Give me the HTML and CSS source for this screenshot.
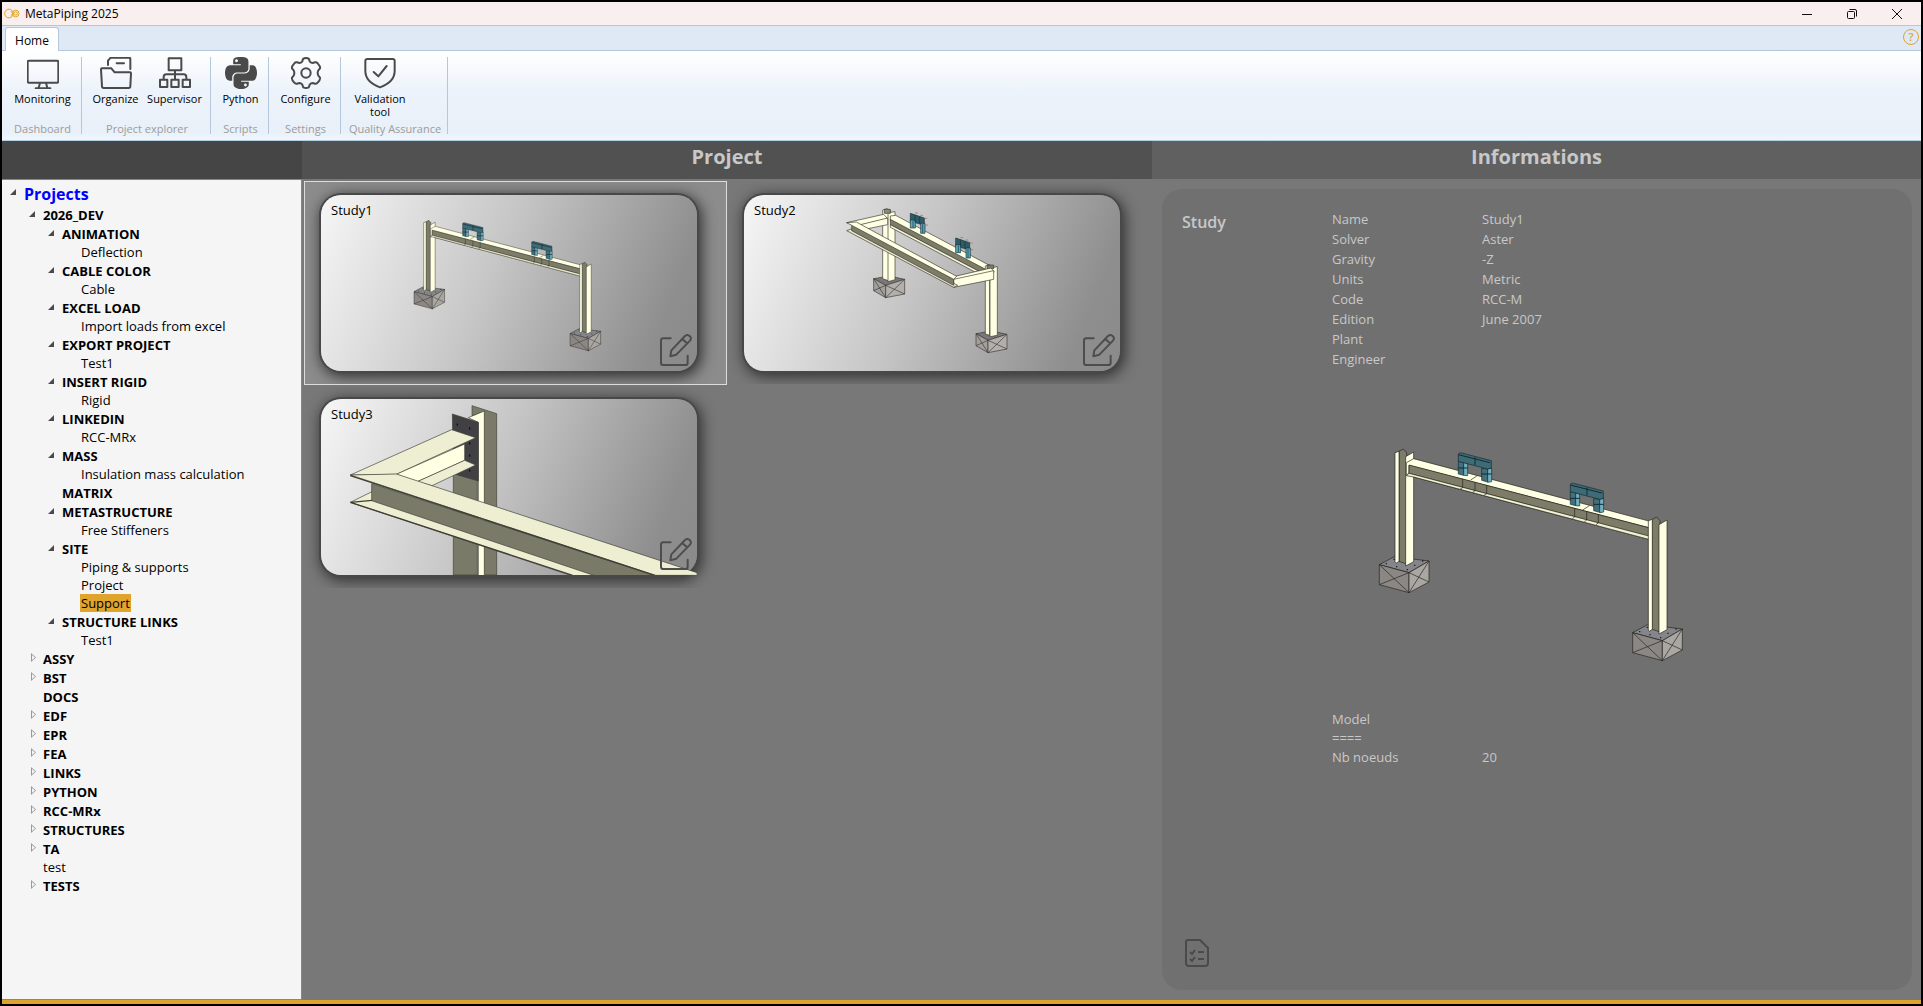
FILE: index.html
```html
<!DOCTYPE html>
<html lang="en">
<head>
<meta charset="utf-8">
<meta name="viewport" content="width=device-width, initial-scale=1">
<title>MetaPiping 2025</title>
<link rel="stylesheet" href="styles.css">
</head>
<body>
<svg class="defs" aria-hidden="true">
  <defs>
    <g id="column" stroke="#22221c" stroke-width="2" stroke-linejoin="round">
      <path fill="#85858c" d="M118 404 163 380 267 393 207 428Z"/>
      <path fill="#8b8784" d="M118 404 207 428V488L118 464Z"/>
      <path fill="#aaa6a2" d="M207 428 267 393V456L207 488Z"/>
      <path fill="none" d="M118 404 207 488M207 428 118 464M207 428 267 456M267 393 207 488"/>
      <path fill="none" stroke-width="4" d="M137 401h4M168 410h4M200 419h4M222 406h4M246 393h4M160 388h4"/>
      <path fill="#7c7c69" d="M177 64 190 57 200 68V402L177 394Z"/>
      <path fill="#ffffe4" d="M165 68 177 64V394L168 400 165 396Z"/>
      <path fill="#ffffe4" d="M197 80 221 66V395L197 408Z"/>
    </g>
    <g id="clamp" stroke="#102a30" stroke-width="2" stroke-linejoin="round">
      <path fill="#42707c" d="M355 94 371 97V136L355 132ZM425 115 443 117V156L425 151Z"/>
      <path fill="#6fb0c2" d="M371 97 383 101V137L371 136ZM443 117 455 114V155L443 157Z"/>
      <path fill="#3f6b76" d="M355 72 361 68 454 92V114L443 117 355 94Z"/>
      <path fill="none" stroke-width="3" d="M355 74 450 98M405 82V105M355 114H383M425 132H455"/>
    </g>
    <symbol id="portal" viewBox="0 0 1140 750">
      <use href="#column"/>
      <g stroke="#22221c" stroke-width="2" stroke-linejoin="round">
        <path fill="#ffffe4" d="M199 98 221 86 930 274V294L207 106V130L221 141 930 329V317L207 128 199 137Z"/>
        <path fill="#7c7c69" d="M207 105 930 294V320L207 130Z"/>
        <path fill="#f2f2d4" d="M199 137 207 130 930 319V329L221 141Z"/>
        <path fill="none" d="M368 146V173L360 178M405 156V182L398 187M440 165V191L432 196M704 234V261L697 266M740 243V270L733 275M775 252V279L768 284M392 150 412 137M728 240 748 227"/>
      </g>
      <use href="#clamp"/>
      <use href="#clamp" x="336" y="91"/>
      <use href="#column" x="760" y="204"/>
    </symbol>
    <symbol id="edit" viewBox="0 0 96 96">
      <path fill="none" stroke="currentColor" stroke-width="6" stroke-linecap="round" stroke-linejoin="round" d="M32 13H10Q3 13 3 20V86Q3 93 10 93H76Q83 93 83 86V65M31 67 34 49 75 6Q82 0 89 6 96 12 90 20L49 62ZM67 15 81 28"/>
    </symbol>
  </defs>
</svg>
<div class="window">
  <header class="titlebar">
    <svg class="logo" viewBox="0 0 48 32" aria-hidden="true"><g fill="none" stroke="#dfa42b" stroke-width="3"><circle cx="15" cy="16" r="13"/><circle cx="35" cy="16" r="10"/><circle cx="35" cy="16" r="5"/><path d="M20 9 27 16 20 23"/></g></svg>
    <span class="app-name">MetaPiping 2025</span>
    <div class="window-controls">
      <button type="button" aria-label="Minimize"><svg viewBox="0 0 12 12"><path d="M1 6.5H11"/></svg></button>
      <button type="button" aria-label="Restore"><svg viewBox="0 0 12 12"><rect x="1.500" y="3.500" width="7" height="7" rx="1"/><path d="M3.500 1.500H9Q10.500 1.500 10.500 3V8.500"/></svg></button>
      <button type="button" aria-label="Close"><svg viewBox="0 0 12 12"><path d="M1 1 11 11M11 1 1 11"/></svg></button>
    </div>
  </header>
  <nav class="tabs">
    <button type="button" class="tab">Home</button>
    <button type="button" class="help" aria-label="Help">?</button>
  </nav>
  <section class="ribbon">
    <div class="group dashboard">
      <div class="tools">
        <button type="button" class="tool"><svg viewBox="0 0 96 96"><path d="M6 11H90Q94 11 94 15V73Q94 77 90 77H6Q2 77 2 73V15Q2 11 6 11ZM39 78 35 92M57 78 61 92M26 94H70"/></svg>Monitoring</button>
      </div>
      <h2>Dashboard</h2>
    </div>
    <div class="group explorer">
      <div class="tools">
        <button type="button" class="tool"><svg viewBox="0 0 96 96"><path d="M3 37Q3 34 6 34H34L44 46H90Q93 46 93 49L91 88Q91 93 86 93H11Q6 93 6 88ZM24 24V11L32 2H87Q91 2 91 6V36M50 19H72"/></svg>Organize</button>
        <button type="button" class="tool"><svg viewBox="0 0 96 96"><path d="M29 4H67V40H29ZM48 40V66M14 66V60Q14 52 22 52H74Q82 52 82 60V66M3 68H25V90H3ZM37 68H59V90H37ZM71 68H93V90H71Z"/></svg>Supervisor</button>
      </div>
      <h2>Project explorer</h2>
    </div>
    <div class="group scripts">
      <div class="tools">
        <button type="button" class="tool"><svg class="solid" viewBox="0 32 448 448"><path d="M439.8 200.5c-7.7-30.9-22.3-54.2-53.4-54.2h-40.1v47.4c0 36.8-31.2 67.8-66.800 67.800H172.700c-29.200 0-53.400 25-53.400 54.300v101.800c0 29 25.200 46 53.400 54.300 33.800 9.900 66.300 11.700 106.800 0 26.900-7.800 53.400-23.500 53.400-54.300v-40.700H226.200v-13.600h160.200c31.100 0 42.600-21.700 53.400-54.200 11.200-33.500 10.700-65.700 0-108.600zM286.200 404c11.100 0 20.100 9.100 20.100 20.300 0 11.300-9 20.400-20.100 20.400-11 0-20.100-9.200-20.100-20.400.1-11.300 9.100-20.300 20.100-20.300zM167.800 248.100h106.800c29.700 0 53.400-24.500 53.400-54.300V91.900c0-29-24.400-50.700-53.400-55.600-35.800-5.900-74.700-5.600-106.800.1-45.200 8-53.400 24.700-53.400 55.600v40.700h106.900v13.600h-147c-31.100 0-58.300 18.700-66.800 54.200-9.800 40.700-10.200 66.100 0 108.600 7.600 31.600 25.700 54.200 56.800 54.200H101v-48.800c0-35.300 30.500-66.400 66.800-66.400zm-6.700-142.600c-11.100 0-20.100-9.100-20.100-20.300.1-11.300 9-20.400 20.100-20.400 11 0 20.100 9.200 20.100 20.400s-9 20.300-20.100 20.300z"/></svg>Python</button>
      </div>
      <h2>Scripts</h2>
    </div>
    <div class="group settings">
      <div class="tools">
        <button type="button" class="tool"><svg viewBox="0 0 96 96"><path d="M40 5Q48 1 56 5 58 8 59 13 63 18 68 18L75 16Q80 15 83 19 92 29 90 34L85 40Q81 48 85 56L90 62Q92 67 83 77 80 81 75 80L68 78Q63 78 59 83 58 88 56 91 48 95 40 91 38 88 37 83 33 78 28 78L21 80Q16 81 13 77 4 67 6 62L11 56Q15 48 11 40L6 34Q4 29 13 19 16 15 21 16L28 18Q33 18 37 13 38 8 40 5Z"/><circle cx="48" cy="48" r="14"/></svg>Configure</button>
      </div>
      <h2>Settings</h2>
    </div>
    <div class="group quality">
      <div class="tools">
        <button type="button" class="tool"><svg viewBox="0 0 96 96"><path d="M10 6H86Q92 6 92 12V42Q92 75 48 91 4 75 4 42V12Q4 6 10 6ZM29 45 43 58 68 27"/></svg>Validation<br>tool</button>
      </div>
      <h2>Quality Assurance</h2>
    </div>
  </section>
  <main class="workspace">
    <aside class="sidebar">
      <div class="pane-title"></div>
      <ul class="tree">
        <li><button type="button" class="node root open">Projects</button>
          <ul>
            <li><button type="button" class="node folder open">2026_DEV</button>
              <ul>
                <li><button type="button" class="node folder open">ANIMATION</button><ul><li><button type="button" class="node">Deflection</button></li></ul></li>
                <li><button type="button" class="node folder open">CABLE COLOR</button><ul><li><button type="button" class="node">Cable</button></li></ul></li>
                <li><button type="button" class="node folder open">EXCEL LOAD</button><ul><li><button type="button" class="node">Import loads from excel</button></li></ul></li>
                <li><button type="button" class="node folder open">EXPORT PROJECT</button><ul><li><button type="button" class="node">Test1</button></li></ul></li>
                <li><button type="button" class="node folder open">INSERT RIGID</button><ul><li><button type="button" class="node">Rigid</button></li></ul></li>
                <li><button type="button" class="node folder open">LINKEDIN</button><ul><li><button type="button" class="node">RCC-MRx</button></li></ul></li>
                <li><button type="button" class="node folder open">MASS</button><ul><li><button type="button" class="node">Insulation mass calculation</button></li></ul></li>
                <li><button type="button" class="node folder">MATRIX</button></li>
                <li><button type="button" class="node folder open">METASTRUCTURE</button><ul><li><button type="button" class="node">Free Stiffeners</button></li></ul></li>
                <li><button type="button" class="node folder open">SITE</button>
                  <ul>
                    <li><button type="button" class="node">Piping &amp; supports</button></li>
                    <li><button type="button" class="node">Project</button></li>
                    <li><button type="button" class="node selected">Support</button></li>
                  </ul>
                </li>
                <li><button type="button" class="node folder open">STRUCTURE LINKS</button><ul><li><button type="button" class="node">Test1</button></li></ul></li>
              </ul>
            </li>
            <li><button type="button" class="node folder closed">ASSY</button></li>
            <li><button type="button" class="node folder closed">BST</button></li>
            <li><button type="button" class="node folder">DOCS</button></li>
            <li><button type="button" class="node folder closed">EDF</button></li>
            <li><button type="button" class="node folder closed">EPR</button></li>
            <li><button type="button" class="node folder closed">FEA</button></li>
            <li><button type="button" class="node folder closed">LINKS</button></li>
            <li><button type="button" class="node folder closed">PYTHON</button></li>
            <li><button type="button" class="node folder closed">RCC-MRx</button></li>
            <li><button type="button" class="node folder closed">STRUCTURES</button></li>
            <li><button type="button" class="node folder closed">TA</button></li>
            <li><button type="button" class="node">test</button></li>
            <li><button type="button" class="node folder closed">TESTS</button></li>
          </ul>
        </li>
      </ul>
    </aside>
    <section class="project">
      <h1 class="pane-title">Project</h1>
      <div class="studies">
        <div class="cell active">
          <article class="card">
            <svg class="scene" viewBox="63 60 1128 528" aria-hidden="true"><use href="#portal" x="269" y="101" width="703" height="462"/></svg>
            <h3>Study1</h3>
            <button type="button" class="edit" aria-label="Edit Study1"><svg><use href="#edit"/></svg></button>
          </article>
        </div>
        <div class="cell">
          <article class="card">
            <svg class="scene" viewBox="27 45 1128 528" aria-hidden="true">
              <g stroke="#3a3a30" stroke-width="2" stroke-linejoin="round">
                <g id="footing">
                  <path fill="#77777d" d="M416 296 462 288 509 298 452 316Z"/>
                  <path fill="#a39f9c" d="M416 296 452 316V353L416 332Z"/>
                  <path fill="#b3afac" d="M452 316 509 298V342L452 353Z"/>
                  <path fill="none" d="M416 296 452 353M452 316 416 332M452 316 509 342M509 298 452 353"/>
                </g>
                <use href="#footing" x="307" y="165"/>
                <path fill="#ffffe4" d="M443 90 456 86 466 92V304L443 296Z"/>
                <path fill="#ffffe4" d="M459 98 480 95V299L459 305Z"/>
                <path fill="#8a8a76" d="M448 88H466V100H448Z"/>
                <path fill="#ffffe4" d="M335 128 446 103 458 116 365 138Z"/>
                <path fill="#ffffe4" d="M368 136 458 114V134L398 146Z"/>
                <path fill="#ffffe4" d="M466 108 482 106 765 257 750 272 466 122Z"/>
                <path fill="#7c7c69" d="M466 118 752 268 736 276 466 134Z"/>
                <path fill="#f4f4d8" d="M466 134 736 276 720 276 466 142Z"/>
                <path fill="#ffffe4" d="M751 258 764 254V466L751 462Z"/>
                <path fill="#ffffe4" d="M765 264 787 260V466L765 470Z"/>
                <path fill="#7c7c69" d="M756 255H776V266H756Z"/>
                <path fill="#ffffe4" d="M656 290 768 264 778 276 660 301Z"/>
                <path fill="#ffffe4" d="M656 298 776 272V298L656 322Z"/>
                <path fill="#e9e9cb" d="M335 152 348 147 668 316 656 322Z"/>
                <path fill="#7c7c69" d="M350 134 656 296V316L350 152Z"/>
                <path fill="#ffffe4" d="M335 128 364 126 665 289 656 298Z"/>
              </g>
              <g id="support" stroke="#14323a" stroke-width="2">
                <path fill="#2f5b66" d="M526 100 568 114V136L526 124Z"/>
                <path fill="#5fa9bd" d="M526 120H541V144H526ZM557 130H570V160H557Z"/>
                <path fill="none" d="M534 122V143M563 132V159M540 105V126M554 110V131"/>
                <path fill="none" stroke="#a06464" d="M540 99H549M556 106H564M568 115H577M570 135H579"/>
              </g>
              <use href="#support" x="136" y="74"/>
            </svg>
            <h3>Study2</h3>
            <button type="button" class="edit" aria-label="Edit Study2"><svg><use href="#edit"/></svg></button>
          </article>
        </div>
        <div class="cell">
          <article class="card">
            <svg class="scene" viewBox="63 42 1128 528" aria-hidden="true">
              <g stroke="#3f3f35" stroke-width="2" stroke-linejoin="round">
                <path fill="#7a7a69" d="M516 62 590 86V570H553V80L516 92ZM460 262H532V570H460Z"/>
                <path fill="#ffffe4" d="M505 98 553 78V572H535V112Z"/>
                <path fill="#414145" d="M457 87 535 112V288L460 266Z"/>
                <path fill="none" stroke="#111" stroke-width="7" d="M470 119h4M507 130h4M507 175h4M507 212h4M507 257h4"/>
                <path fill="#eeefd2" d="M151 270 455 134 527 158 289 268Z"/>
                <path fill="#ffffe4" d="M289 268 494 177V226L352 290Z"/>
                <path fill="#eeefd2" d="M352 290 494 226 527 240 396 302Z"/>
                <path fill="#eeefd2" d="M151 352 216 320 890 572H815Z"/>
                <path fill="#7a7a69" d="M215 296 1065 572H884L215 347Z"/>
                <path fill="#eeefd2" d="M151 270 289 267 1191 563V571H1065Z"/>
                <path fill="none" stroke-width="4" d="M151 272 1065 571M151 352 818 571M151 352 216 346"/>
              </g>
            </svg>
            <h3>Study3</h3>
            <button type="button" class="edit" aria-label="Edit Study3"><svg><use href="#edit"/></svg></button>
          </article>
        </div>
      </div>
    </section>
    <section class="info">
      <h1 class="pane-title">Informations</h1>
      <div class="panel">
        <h2>Study</h2>
        <div class="details">
          <dl>
            <dt>Name</dt><dd>Study1</dd>
            <dt>Solver</dt><dd>Aster</dd>
            <dt>Gravity</dt><dd>-Z</dd>
            <dt>Units</dt><dd>Metric</dd>
            <dt>Code</dt><dd>RCC-M</dd>
            <dt>Edition</dt><dd>June 2007</dd>
            <dt>Plant</dt><dd></dd>
            <dt>Engineer</dt><dd></dd>
          </dl>
          <svg class="preview" aria-hidden="true"><use href="#portal"/></svg>
          <dl class="model">
            <dt>Model</dt><dd></dd>
            <dt>====</dt><dd></dd>
            <dt>Nb noeuds</dt><dd>20</dd>
          </dl>
        </div>
        <button type="button" class="report" aria-label="Report"><svg viewBox="0 0 24 28"><path d="M3 1H15L23 9V24Q23 27 20 27H4Q1 27 1 24V3Q1 1 3 1ZM5 13 7 15 10 11M13 13H19M5 20 7 22 10 18M13 20H19"/></svg></button>
      </div>
    </section>
  </main>
  <footer class="statusbar"></footer>
</div>
</body>
</html>
```
FILE: styles.css
```css
* { box-sizing: border-box; }
body, h1, h2, h3, ul, dl, dd { margin: 0; padding: 0; }
body {
  font-family: "Open Sans", "Noto Sans", sans-serif;
  font-size: 13px;
  color: #000;
}
button {
  font: inherit;
  color: inherit;
  background: none;
  border: 0;
  margin: 0;
  padding: 0;
}
svg { display: block; }
.defs { position: absolute; width: 0; height: 0; }

.window {
  display: flex;
  flex-direction: column;
  min-height: 100vh;
  border: 2px solid #000;
}

/* Title bar */
.titlebar {
  display: flex;
  align-items: center;
  height: 24px;
  background: #f9efef;
  border-bottom: 1px solid #b4c7dc;
  padding: 0 2px;
}
.logo { width: 16px; height: 11px; margin-right: 5px; }
.app-name { font-size: 12px; }
.window-controls { display: flex; margin-left: auto; }
.window-controls button {
  display: grid;
  place-items: center;
  width: 45px;
  height: 22px;
}
.window-controls svg {
  width: 12px;
  height: 12px;
  fill: none;
  stroke: #111;
}

/* Tabs */
.tabs {
  display: flex;
  align-items: flex-end;
  justify-content: space-between;
  height: 25px;
  padding: 0 2px 0 3px;
  background: #dfe9f5;
  border-bottom: 1px solid #b4c7dc;
}
.tab {
  height: 24px;
  width: 54px;
  margin-bottom: -1px;
  padding-top: 2px;
  font-size: 12px;
  background: #fff;
  border: 1px solid #b4c7dc;
  border-bottom: 0;
  border-radius: 3px 3px 0 0;
}
.help {
  width: 16px;
  height: 16px;
  margin-bottom: 5px;
  border: 1px solid #dfa42b;
  border-radius: 50%;
  color: #dfa42b;
  font-size: 11px;
  font-weight: 600;
  line-height: 14px;
}

/* Ribbon */
.ribbon {
  display: flex;
  height: 90px;
  padding: 6px 0;
  background: linear-gradient(#fff, #edf3fb 45%, #e8f0f9 90%, #f0f5fb);
  border-bottom: 1px solid #b4d0e4;
}
.group {
  display: flex;
  flex-direction: column;
  justify-content: space-between;
  padding-left: 2px;
  border-right: 1px solid #b4c7dc;
}
.tools { display: flex; }
.tool {
  display: flex;
  flex-direction: column;
  align-items: center;
  flex: 1;
  font-size: 11px;
  line-height: 13px;
}
.tool svg {
  width: 32px;
  height: 32px;
  margin-bottom: 3px;
  fill: none;
  stroke: #4a4a4a;
  stroke-width: 6;
  stroke-linecap: round;
  stroke-linejoin: round;
}
.tool svg.solid { fill: #4a4a4a; stroke: none; }
.group h2 {
  font-size: 11px;
  font-weight: 400;
  line-height: 10px;
  text-align: center;
  white-space: nowrap;
  color: #9c9c9c;
}
.dashboard { width: 80px; }
.explorer { width: 129px; }
.explorer .tools { padding: 0 6px 0 2px; }
.scripts { width: 58px; }
.settings { width: 72px; }
.quality { width: 107px; }
.quality .tool { flex: none; width: 74px; }

/* Workspace */
.workspace {
  display: grid;
  grid-template-columns: 300px minmax(0, 850fr) minmax(0, 769fr);
  flex: 1;
  background: #787878;
}
.pane-title {
  height: 38px;
  font-size: 20px;
  font-weight: 700;
  line-height: 32px;
  text-align: center;
  color: #c8c8c8;
}
.sidebar .pane-title { background: #454545; }
.project .pane-title { background: #515151; }
.info .pane-title { background: #606060; }
.sidebar, .info { display: flex; flex-direction: column; }

/* Project tree */
.tree {
  flex: 1;
  padding: 3px 0 8px 3px;
  background: #f5f5f5;
  border: 1px solid #828790;
  border-width: 1px 1px 1px 0;
}
.tree, .tree ul { list-style: none; }
.tree ul { padding-left: 19px; }
.node {
  display: block;
  position: relative;
  height: 18px;
  margin-left: 18px;
  padding: 0 1px;
  line-height: 18px;
}
.node.folder { height: 19px; font-weight: 700; }
.node.root {
  height: 22px;
  font-size: 16px;
  font-weight: 700;
  line-height: 20px;
  color: #00f;
}
.node.selected { background: #dfa42b; }
.open::before, .closed::before {
  content: "";
  position: absolute;
  top: 6px;
  left: -13px;
  width: 6px;
  height: 6px;
  background: #4a4a4a;
  clip-path: polygon(100% 0, 100% 100%, 0 100%);
}
.closed::before {
  top: 4px;
  left: -11px;
  width: 5px;
  height: 9px;
  background: #999;
  clip-path: polygon(0 0, 100% 50%, 0 100%, 0 0, 1px 2px, 1px 7px, 4px 50%, 1px 2px);
}

/* Study cards */
.studies {
  display: flex;
  flex-wrap: wrap;
  align-content: flex-start;
  padding: 2px;
}
.cell {
  width: 423px;
  height: 204px;
  padding: 13px 16px;
  border: 1px solid transparent;
  overflow: hidden;
}
.cell.active { background: #8c8c8c; border-color: #dcdcdc; }
.card {
  position: relative;
  width: 376px;
  height: 176px;
  border-radius: 20px;
  background: linear-gradient(112deg, #f6f6f6, #c6c6c6 45%, #8e8e8e 88%, #8a8a8a);
  box-shadow: 0 0 0 2px #484848, 2px 3px 14px 3px #333;
}
.scene { width: 100%; height: 100%; }
.card h3 {
  position: absolute;
  top: 6px;
  left: 10px;
  font-size: 13px;
  font-weight: 400;
  line-height: 19px;
}
.edit {
  position: absolute;
  right: 5px;
  bottom: 5px;
  color: #4d4d4d;
}
.edit svg { width: 32px; height: 32px; }

/* Information panel */
.panel {
  display: grid;
  grid-template-columns: 150px minmax(0, 1fr);
  grid-template-rows: 1fr auto;
  flex: 1;
  margin: 10px 9px 10px 10px;
  padding: 20px;
  border-radius: 20px;
  background: #707070;
  color: #c8c8c8;
}
.panel h2 { font-size: 16px; line-height: 26px; font-weight: 600; }
.panel dl {
  display: grid;
  grid-template-columns: 150px minmax(0, 1fr);
  grid-auto-rows: 20px;
  line-height: 20px;
}
.preview {
  width: 380px;
  height: 250px;
  margin: 61px 0 29px 8px;
}
.panel .model { grid-auto-rows: 19px; }
.report { width: 24px; margin: 0 0 3px 3px; }
.report svg {
  width: 24px;
  height: 28px;
  fill: none;
  stroke: #4a4a4a;
  stroke-width: 2;
}

.statusbar { height: 4px; background: #dfa42b; }
```
